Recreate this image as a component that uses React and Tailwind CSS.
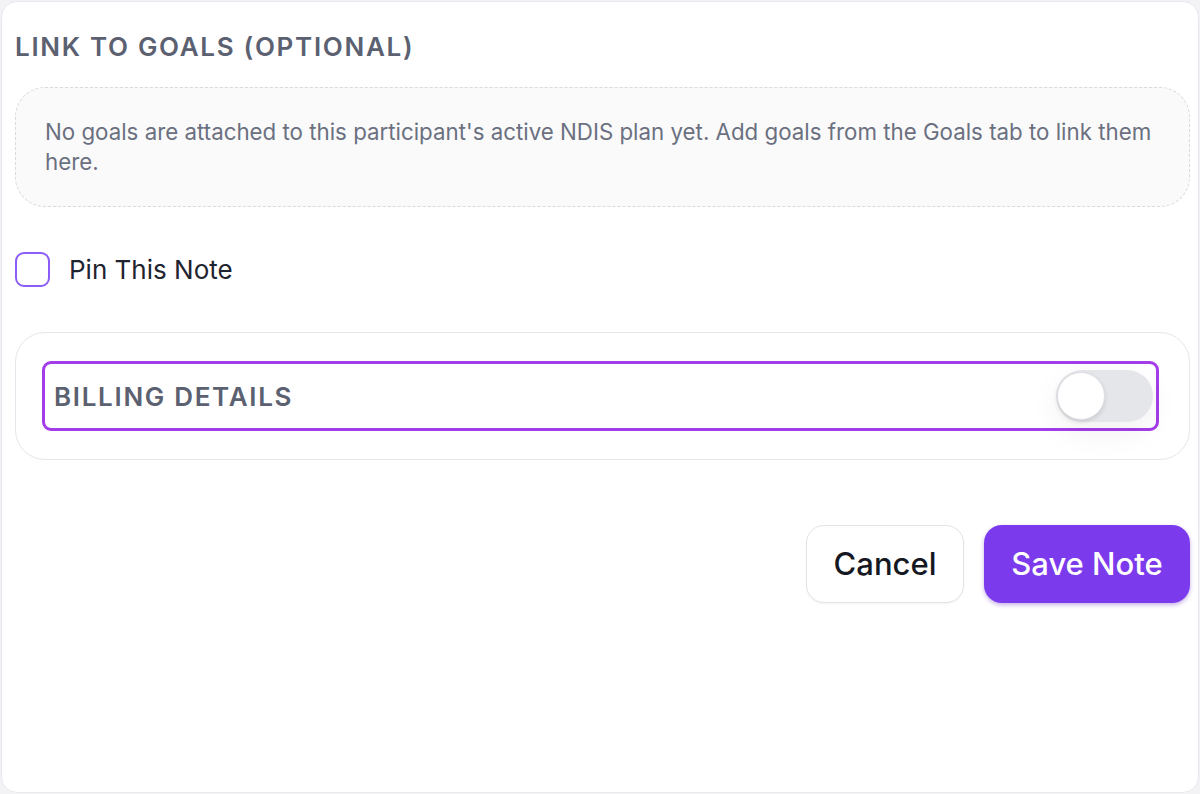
export default function App() {
  return (
    <div className="min-h-screen w-full bg-[#f3f3f6] p-px" style={{ fontFamily: "Inter, 'Liberation Sans', sans-serif" }}>
      <div className="flex h-[792px] flex-col rounded-[16px] border border-[#e8e8ee] bg-white pl-[13px] pr-[8px] pt-[29px]">
        <h2 className="text-[26px] font-semibold uppercase leading-[32px] tracking-[0.065em] text-[#5b6170]">
          Link to Goals (Optional)
        </h2>

        <div className="mt-[24px] rounded-[30px] border border-dashed border-[#d9dae0] bg-[#fafafb] px-[29px] py-[29px]">
          <p className="text-[22.3px] leading-[30px] text-[#6b7080]">
            No goals are attached to this participant's active NDIS plan yet. Add goals from the Goals tab to link them here.
          </p>
        </div>

        <label className="mt-[45px] flex items-center gap-[19px]">
          <span className="h-[35px] w-[35px] rounded-[9px] border-2 border-[#8b5cf6] bg-white" />
          <span className="text-[26px] leading-[35px] text-[#1f2430]">Pin This Note</span>
        </label>

        <div className="mt-[45px] rounded-[30px] border border-[#e5e6eb] bg-white py-[28px] pl-[26px] pr-[30px]">
          <div className="flex h-[70px] items-center justify-between rounded-[9px] border-[3px] border-[#a33ce9] pl-[9px] pr-[3px]">
            <span className="text-[26px] font-semibold uppercase tracking-[0.065em] text-[#5b6170]">
              Billing Details
            </span>
            <span className="relative flex h-[52px] w-[97px] items-center rounded-full bg-[#e5e6ea] shadow-[0_10px_30px_rgba(0,0,0,0.06)]">
              <span className="ml-[1px] h-[48px] w-[48px] rounded-full border border-[#dedfe4] bg-white shadow-[0_2px_4px_rgba(0,0,0,0.12)]" />
            </span>
          </div>
        </div>

        <div className="mt-[65px] flex justify-end gap-[20px]">
          <button className="h-[78px] w-[158px] rounded-[18px] border border-[#e3e4e9] bg-white text-[31px] font-medium text-[#151823] shadow-[0_1px_2px_rgba(0,0,0,0.05)]">
            Cancel
          </button>
          <button className="h-[78px] w-[206px] rounded-[18px] bg-[#7c3aed] text-[31px] font-medium text-white shadow-[0_2px_4px_rgba(91,33,182,0.35)]">
            Save Note
          </button>
        </div>
      </div>
    </div>
  );
}
